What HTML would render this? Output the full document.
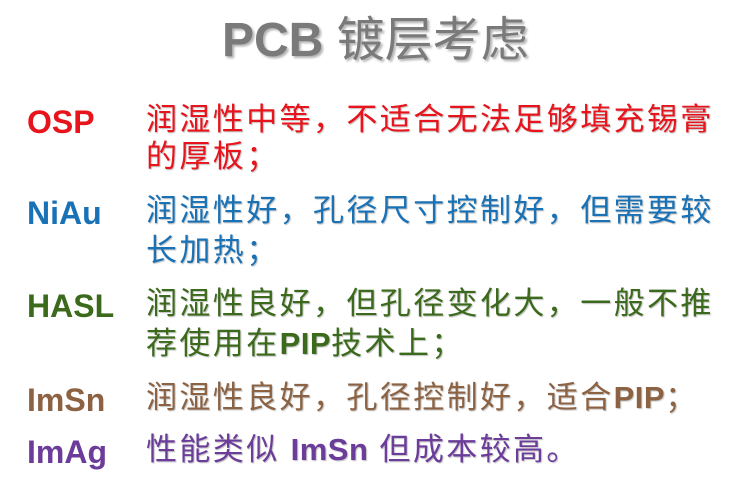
<!DOCTYPE html>
<html><head><meta charset="utf-8"><style>
body{margin:0;width:747px;height:487px;background:#fff;position:relative;overflow:hidden;font-family:"Liberation Sans","Noto Sans CJK SC",sans-serif}
.t{position:absolute;white-space:nowrap;line-height:1}
.l{font-weight:bold;font-size:32px;left:27px}
.c{font-size:31px;left:146px;letter-spacing:2.4px;text-shadow:1px 1px 1px rgba(0,0,0,.25)}
.c b{font-family:"Liberation Sans",sans-serif;letter-spacing:0.5px}
.r{color:#e8141c}.bl{color:#1a72b6}.g{color:#3c6a1c}.br{color:#8c6242}.p{color:#6b3c9a}
</style></head><body>
<div class="t" style="left:222px;top:17px;font-size:48px;color:#7a7a7a;text-shadow:2px 2px 2px rgba(0,0,0,.3)"><b>PCB</b> 镀层考虑</div>
<div class="t l r" style="top:106px">OSP</div>
<div class="t c r" style="top:104px">润湿性中等，不适合无法足够填充锡膏</div>
<div class="t c r" style="top:141px">的厚板；</div>
<div class="t l bl" style="top:197px">NiAu</div>
<div class="t c bl" style="top:195px">润湿性好，孔径尺寸控制好，但需要较</div>
<div class="t c bl" style="top:235px">长加热；</div>
<div class="t l g" style="top:290px">HASL</div>
<div class="t c g" style="top:288px">润湿性良好，但孔径变化大，一般不推</div>
<div class="t c g" style="top:328px">荐使用在<b>PIP</b>技术上；</div>
<div class="t l br" style="top:384px">ImSn</div>
<div class="t c br" style="top:382px">润湿性良好，孔径控制好，适合<b>PIP</b>；</div>
<div class="t l p" style="top:436px">ImAg</div>
<div class="t c p" style="top:434px">性能类似 <b>ImSn</b> 但成本较高。</div>
</body></html>
